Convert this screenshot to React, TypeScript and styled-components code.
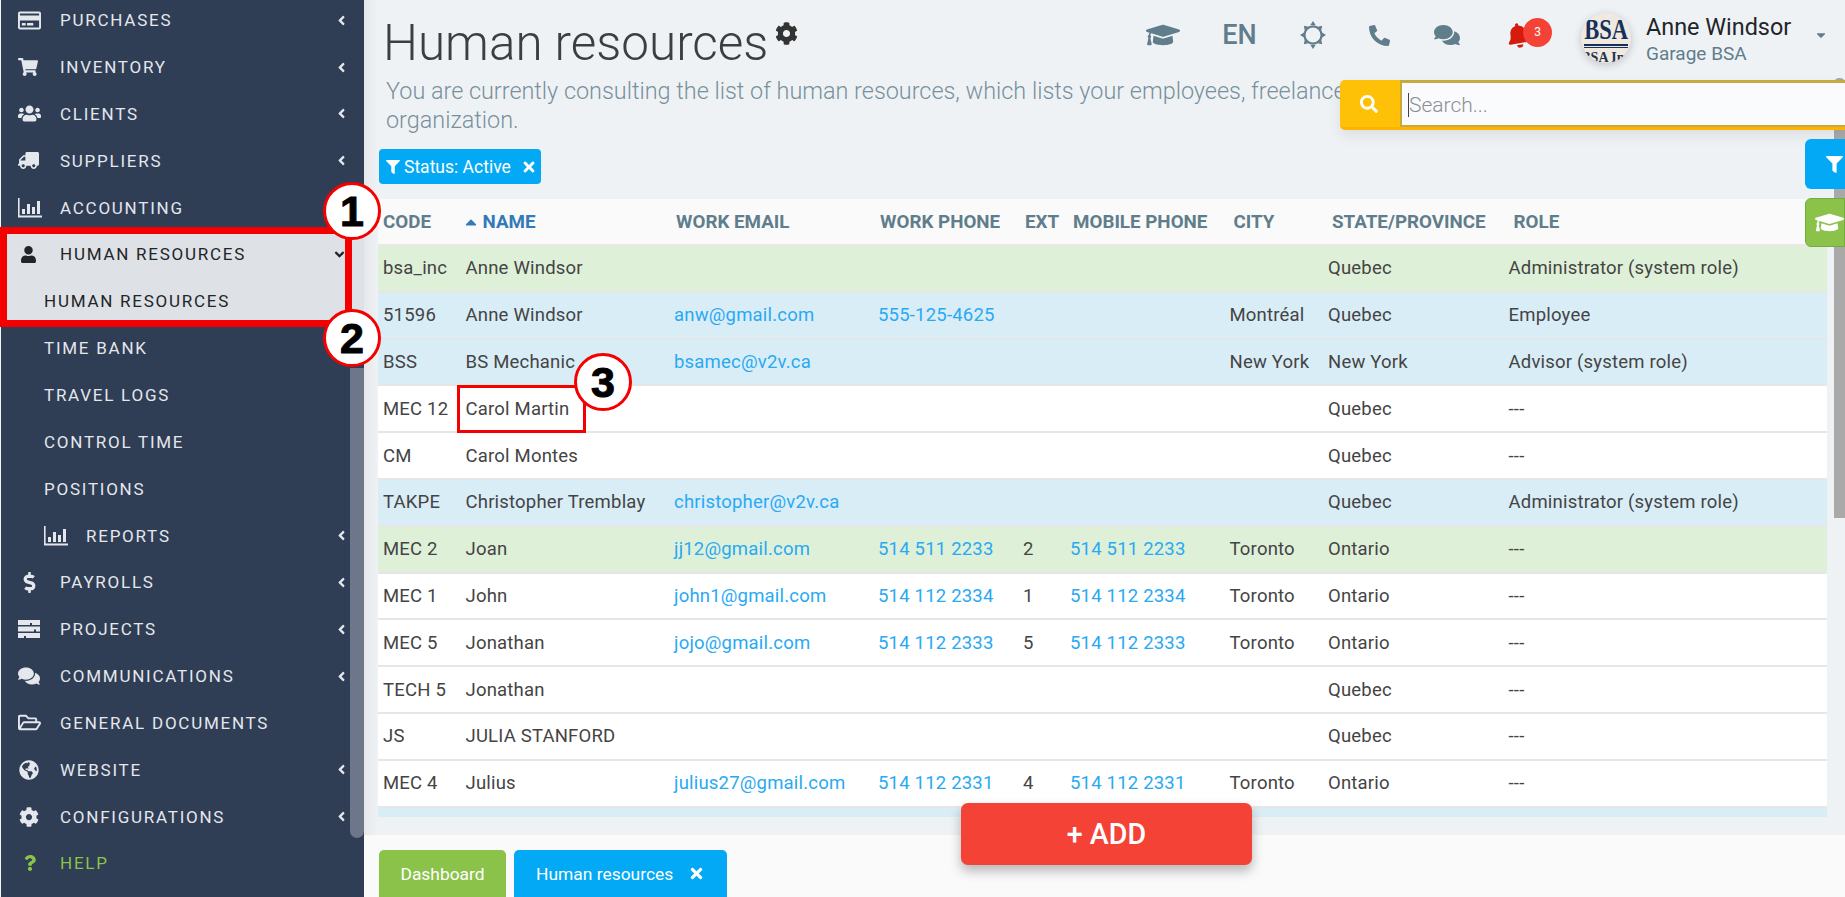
import styled, { createGlobalStyle } from "styled-components";
import type { ReactNode } from "react";
import {
  FaAngleDown,
  FaAngleLeft,
  FaBell,
  FaCaretDown,
  FaCaretUp,
  FaCog,
  FaComments,
  FaDollarSign,
  FaFilter,
  FaGlobeAmericas,
  FaGraduationCap,
  FaPhoneAlt,
  FaQuestion,
  FaRegCreditCard,
  FaRegFolderOpen,
  FaSearch,
  FaShoppingCart,
  FaTimes,
  FaTruck,
  FaUser,
  FaUsers,
} from "react-icons/fa";

// ===== small drawn icons =====

const BarChartIcon = () => (
  <svg width="24" height="20" viewBox="0 0 24 20" fill="currentColor">
    <path d="M0 0h1.6v17.6H24V19.4H0z" />
    <path d="M4 11h3v5H4zM9 6h3v10H9zM14 9h3v7h-3zM19 3h3v13h-3z" />
  </svg>
);

const TasksIcon = () => (
  <svg width="22" height="18" viewBox="0 0 22 18" fill="currentColor">
    <path d="M0 0h22v5H14V3h-2v2H0zM0 6.5h22v5h-4v-2h-2v2H0zM0 13h22v5H8v-2H6v2H0z" />
  </svg>
);

const SunOutlineIcon = () => (
  <svg width="26" height="28" viewBox="0 0 26 28" fill="none" stroke="currentColor">
    <circle cx="13" cy="14" r="8.6" strokeWidth="2.2" />
    <path
      d="M13 0l2.6 4h-5.2zM13 28l2.6-4h-5.2zM0 14l4-2.6v5.2zM26 14l-4-2.6v5.2zM3.8 4.8l4.6 1-3.6 3.6zM22.2 4.8l-4.6 1 3.6 3.6zM3.8 23.2l4.6-1-3.6-3.6zM22.2 23.2l-4.6-1 3.6-3.6z"
      fill="currentColor"
      stroke="none"
    />
  </svg>
);

const FlippedTruck = styled(FaTruck)`
  transform: scaleX(-1);
`;

const TiltedBell = styled(FaBell)`
  margin-left: 3px;
  transform: rotate(-10deg);
`;

// ===== data =====

type MenuItem = {
  label: string;
  icon?: ReactNode;
  inset?: number;
  sub?: boolean;
  active?: boolean;
  open?: boolean;
  arrow?: boolean;
  help?: boolean;
};

const menu: MenuItem[] = [
  { label: "Purchases", icon: <FaRegCreditCard size={23} />, arrow: true },
  { label: "Inventory", icon: <FaShoppingCart size={20} />, arrow: true },
  { label: "Clients", icon: <FaUsers size={23} />, arrow: true },
  { label: "Suppliers", icon: <FlippedTruck size={21} />, arrow: true },
  { label: "Accounting", icon: <BarChartIcon /> },
  { label: "Human resources", icon: <FaUser size={17} />, inset: 2, arrow: true, active: true, open: true },
  { label: "Human resources", sub: true, active: true },
  { label: "Time bank", sub: true },
  { label: "Travel logs", sub: true },
  { label: "Control time", sub: true },
  { label: "Positions", sub: true },
  { label: "Reports", sub: true, icon: <BarChartIcon />, arrow: true },
  { label: "Payrolls", icon: <FaDollarSign size={21} />, inset: 1, arrow: true },
  { label: "Projects", icon: <TasksIcon />, arrow: true },
  { label: "Communications", icon: <FaComments size={22} />, arrow: true },
  { label: "General documents", icon: <FaRegFolderOpen size={23} /> },
  { label: "Website", icon: <FaGlobeAmericas size={20} />, inset: 1, arrow: true },
  { label: "Configurations", icon: <FaCog size={20} />, inset: 1, arrow: true },
  { label: "Help", icon: <FaQuestion size={16} />, inset: 4, help: true },
];

type Tone = "green" | "blue" | "white";

type Employee = {
  tone: Tone;
  code: string;
  name: string;
  email?: string;
  phone?: string;
  ext?: string;
  mobile?: string;
  city?: string;
  state: string;
  role: string;
};

const employees: Employee[] = [
  { tone: "green", code: "bsa_inc", name: "Anne Windsor", state: "Quebec", role: "Administrator (system role)" },
  { tone: "blue", code: "51596", name: "Anne Windsor", email: "anw@gmail.com", phone: "555-125-4625", city: "Montréal", state: "Quebec", role: "Employee" },
  { tone: "blue", code: "BSS", name: "BS Mechanic", email: "bsamec@v2v.ca", city: "New York", state: "New York", role: "Advisor (system role)" },
  { tone: "white", code: "MEC 12", name: "Carol Martin", state: "Quebec", role: "---" },
  { tone: "white", code: "CM", name: "Carol Montes", state: "Quebec", role: "---" },
  { tone: "blue", code: "TAKPE", name: "Christopher Tremblay", email: "christopher@v2v.ca", state: "Quebec", role: "Administrator (system role)" },
  { tone: "green", code: "MEC 2", name: "Joan", email: "jj12@gmail.com", phone: "514 511 2233", ext: "2", mobile: "514 511 2233", city: "Toronto", state: "Ontario", role: "---" },
  { tone: "white", code: "MEC 1", name: "John", email: "john1@gmail.com", phone: "514 112 2334", ext: "1", mobile: "514 112 2334", city: "Toronto", state: "Ontario", role: "---" },
  { tone: "white", code: "MEC 5", name: "Jonathan", email: "jojo@gmail.com", phone: "514 112 2333", ext: "5", mobile: "514 112 2333", city: "Toronto", state: "Ontario", role: "---" },
  { tone: "white", code: "TECH 5", name: "Jonathan", state: "Quebec", role: "---" },
  { tone: "white", code: "JS", name: "JULIA STANFORD", state: "Quebec", role: "---" },
  { tone: "white", code: "MEC 4", name: "Julius", email: "julius27@gmail.com", phone: "514 112 2331", ext: "4", mobile: "514 112 2331", city: "Toronto", state: "Ontario", role: "---" },
];

const toneColors: Record<Tone, string> = {
  green: "#dff0d8",
  blue: "#d9edf7",
  white: "#ffffff",
};

// ===== styled-components =====

const GlobalStyle = createGlobalStyle`
  html, body {
    margin: 0;
    height: 100%;
    overflow: hidden;
    background: #eff2f5;
    font-family: Roboto, "Liberation Sans", sans-serif;
  }
  * { box-sizing: border-box; }
`;

const Page = styled.div`
  position: relative;
  display: flex;
  width: 1845px;
  height: 897px;
  overflow: hidden;
`;

const Sidebar = styled.nav`
  position: relative;
  flex: 0 0 364px;
  height: 897px;
  border-left: 1px solid #f4f4f4;
  background: #2f3d55;
  overflow: hidden;
`;

const MenuList = styled.div`
  margin-top: -3.2px;
`;

const MenuRow = styled.div<{ $sub?: boolean; $active?: boolean; $help?: boolean }>`
  display: flex;
  align-items: center;
  height: 46.85px;
  padding: 0 15px 0 ${({ $sub }) => ($sub ? "43px" : "17px")};
  background: ${({ $active }) => ($active ? "#dee1e5" : "transparent")};
  color: ${({ $active, $help }) =>
    $active ? "#212529" : $help ? "#8bc34a" : "#e4e7ec"};
  font-size: 17px;
  letter-spacing: 1.75px;
  text-transform: uppercase;
`;

const MenuIcon = styled.span<{ $inset?: number }>`
  display: flex;
  align-items: center;
  flex: 0 0 42px;
  padding-left: ${({ $inset }) => $inset ?? 0}px;
`;

const MenuLabel = styled.span`
  flex: 1;
`;

const OpenArrow = styled.span`
  display: flex;
  margin-right: 2px;
`;

const SideThumb = styled.div`
  position: absolute;
  top: 368px;
  right: 0;
  width: 14px;
  height: 470px;
  border-radius: 0 0 7px 7px;
  background: #6d7789;
`;

const Main = styled.main`
  display: flex;
  flex: 1;
  flex-direction: column;
  min-width: 0;
  background: linear-gradient(to right, #e6e8eb, #eff2f5 14px);
`;

const Head = styled.header`
  height: 199px;
  padding-left: 14px;
`;

const TopRow = styled.div`
  display: flex;
  align-items: flex-start;
  height: 72px;
`;

const Title = styled.h1`
  margin: 13px 0 0 5px;
  color: #3c3f42;
  font-size: 49.4px;
  font-weight: 300;
  line-height: 60px;
  white-space: nowrap;
`;

const TitleGear = styled.span`
  margin: 22px 0 0 7px;
  color: #333;
  font-size: 23px;
`;

const Tools = styled.div`
  display: grid;
  grid-template-columns: 76px 77px 70px 62px 73.5px 67.5px;
  align-items: center;
  height: 70px;
  margin-left: auto;
  color: #607d8b;
`;

const ToolSlot = styled.span<{ $alert?: boolean }>`
  position: relative;
  display: flex;
  align-items: center;
  justify-content: center;
  color: ${({ $alert }) => ($alert ? "#d61a0c" : "inherit")};
  font-size: 27px;
  font-weight: 500;
`;

const BellBadge = styled.span`
  position: absolute;
  top: -5px;
  left: 39.5px;
  width: 29px;
  height: 29px;
  border-radius: 50%;
  background: #f44336;
  color: #fff;
  font-size: 12px;
  font-weight: 400;
  line-height: 29px;
  text-align: center;
`;

const UserBlock = styled.div`
  display: flex;
  align-items: center;
  width: 294px;
  height: 76px;
  padding-left: 30px;
`;

const Avatar = styled.div`
  display: flex;
  flex-direction: column;
  align-items: center;
  flex: 0 0 50px;
  height: 50px;
  border-radius: 50%;
  background: #efe9df;
  box-shadow: 0 2px 8px rgba(0, 0, 0, 0.2);
  color: #16305c;
  font-family: "Liberation Serif", serif;
  overflow: hidden;
`;

const AvatarMark = styled.span`
  margin-top: 1px;
  font-size: 30px;
  font-weight: 700;
  line-height: 30px;
  transform: scaleX(0.75);
`;

const AvatarRule = styled.span`
  flex: 0 0 4px;
  width: 44px;
  border-bottom: 1px solid #16305c;
  border-top: 2px solid #16305c;
`;

const AvatarSmall = styled.span`
  margin-top: 3px;
  color: #26334e;
  font-size: 14px;
  font-weight: 700;
  line-height: 14px;
  white-space: nowrap;
`;

const UserText = styled.div`
  flex: 1;
  margin: 2px 0 0 15px;
  white-space: nowrap;
`;

const UserName = styled.div`
  color: #212529;
  font-size: 23.4px;
  line-height: 28px;
`;

const UserOrg = styled.div`
  margin-top: 2px;
  color: #607d8b;
  font-size: 19px;
  line-height: 22px;
`;

const UserCaret = styled.span`
  display: flex;
  margin: -6px 17px 0 0;
  color: #607d8b;
  font-size: 14px;
`;

const Description = styled.p`
  margin: 5px 0 0 8px;
  color: #78909c;
  font-size: 23.4px;
  font-weight: 300;
  line-height: 29px;
  white-space: nowrap;
`;

const FilterChip = styled.div`
  display: inline-flex;
  align-items: center;
  gap: 4px;
  height: 35px;
  margin: 14px 0 0 1px;
  padding: 0 4px 0 7px;
  border-radius: 4px;
  background: #03a9f4;
  color: #fff;
  font-size: 17.5px;
`;

const ChipClose = styled.span`
  display: flex;
  margin-left: 6px;
  font-size: 16px;
`;

const TableWrap = styled.div`
  margin: 0 0 0 14px;
  height: 617px;
`;

const HeadRow = styled.div`
  display: grid;
  grid-template-columns: 82.5px 208.5px 204px 145px 47px 159.5px 98.5px 180.5px 1fr;
  align-items: center;
  height: 47px;
  padding-left: 5px;
  border-bottom: 2px solid #e8e8e8;
  background: #fafafa;
  color: #607d8b;
  font-size: 18.8px;
  font-weight: 700;
`;

const HeadCell = styled.span<{ $sorted?: boolean; $shift?: number }>`
  display: flex;
  align-items: center;
  gap: 3px;
  padding-left: ${({ $shift }) => $shift ?? 2}px;
  color: ${({ $sorted }) => ($sorted ? "#337ab7" : "inherit")};
  white-space: nowrap;
`;

const SortCaret = styled.span`
  display: flex;
  margin-left: -4px;
  font-size: 18px;
`;

const Row = styled.div<{ $tone: Tone }>`
  display: grid;
  grid-template-columns: 82.5px 208.5px 204px 145px 47px 159.5px 98.5px 180.5px 1fr;
  align-items: center;
  width: 1449px;
  height: 46.8px;
  padding-left: 5px;
  border-bottom: 2px solid #e6e6e6;
  background: ${({ $tone }) => toneColors[$tone]};
  color: #444;
  font-size: 18.5px;
  letter-spacing: 0.2px;
`;

const StubRow = styled.div`
  width: 1449px;
  height: 9px;
  background: #d9edf7;
`;

const Cell = styled.span`
  white-space: nowrap;
`;

const LinkCell = styled.a`
  color: #29a9f3;
  white-space: nowrap;
`;

const Footer = styled.footer`
  display: flex;
  align-items: flex-end;
  gap: 8px;
  height: 62px;
  margin-top: auto;
  padding-left: 15px;
  background: #fafafa;
`;

const Tab = styled.div<{ $blue?: boolean }>`
  display: flex;
  align-items: center;
  height: 47px;
  padding: 0 ${({ $blue }) => ($blue ? "22px 0 22px" : "21.5px")};
  border-radius: 5px 5px 0 0;
  background: ${({ $blue }) => ($blue ? "#03a9f4" : "#8bc34a")};
  color: #fff;
  font-size: 17.4px;
`;

const TabClose = styled.span`
  display: flex;
  margin-left: 15px;
  font-size: 17px;
`;

const SearchBox = styled.div`
  position: absolute;
  top: 80px;
  left: 1340px;
  display: flex;
  width: 505px;
  height: 50px;
  border-bottom: 3px solid #ffb300;
  border-radius: 5px 0 0 5px;
  background: #ffc107;
  box-shadow: 0 6px 14px rgba(0, 0, 0, 0.08);
`;

const SearchButton = styled.div`
  display: flex;
  align-items: center;
  justify-content: center;
  flex: 0 0 57px;
  color: #fff;
  font-size: 18px;
`;

const SearchField = styled.div`
  display: flex;
  align-items: center;
  flex: 1;
  margin-left: 3px;
  padding: 1px 0 0 6px;
  border-top: 3px solid #c8a93c;
  border-bottom: 2px solid #c8a93c;
  border-left: 2px solid #c8a93c;
  background: #fafbfc;
`;

const SearchCaret = styled.span`
  width: 1px;
  height: 24px;
  background: #444;
`;

const SearchInput = styled.input`
  flex: 1;
  padding: 0;
  border: 0;
  outline: 0;
  background: transparent;
  font-family: Roboto, sans-serif;
  font-size: 21px;
  font-weight: 300;

  &::placeholder {
    color: #8a8f94;
    opacity: 1;
  }
`;

const SideButton = styled.div<{ $green?: boolean }>`
  position: absolute;
  left: 1805px;
  display: flex;
  align-items: center;
  top: ${({ $green }) => ($green ? "198px" : "139px")};
  width: 40px;
  height: ${({ $green }) => ($green ? "49px" : "50px")};
  padding-left: ${({ $green }) => ($green ? "9px" : "21px")};
  border: ${({ $green }) => ($green ? "1px solid #74ad3c" : "0")};
  border-radius: 6px 0 0 6px;
  background: ${({ $green }) => ($green ? "#8bc34a" : "#03a9f4")};
  color: #fff;
  font-size: ${({ $green }) => ($green ? "33px" : "17px")};
  overflow: hidden;
  z-index: 2;
`;

const PageThumb = styled.div`
  position: absolute;
  top: 78px;
  right: 0;
  width: 11px;
  height: 440px;
  border-radius: 5px 5px 0 0;
  background: #a9a9a9;
`;

const AddButton = styled.div`
  position: absolute;
  top: 803px;
  left: 961px;
  display: flex;
  align-items: center;
  justify-content: center;
  width: 291px;
  height: 62px;
  border-radius: 7px;
  background: #f44336;
  box-shadow: 0 6px 12px rgba(0, 0, 0, 0.28);
  color: #fff;
  font-size: 28.6px;
  font-weight: 500;
`;

const Outline = styled.div<{ $x: number; $y: number; $w: number; $h: number; $line: number }>`
  position: absolute;
  top: ${({ $y }) => $y}px;
  left: ${({ $x }) => $x}px;
  width: ${({ $w }) => $w}px;
  height: ${({ $h }) => $h}px;
  border: ${({ $line }) => $line}px solid #f40000;
`;

const Marker = styled.div<{ $x: number; $y: number }>`
  position: absolute;
  top: ${({ $y }) => $y - 29}px;
  left: ${({ $x }) => $x - 29}px;
  width: 58px;
  height: 58px;
  border: 3px solid #f40000;
  border-radius: 50%;
  background: #fff;
  color: #000;
  font-family: "Liberation Sans", sans-serif;
  font-size: 43px;
  font-weight: 700;
  line-height: 52px;
  text-align: center;
  -webkit-text-stroke: 1px #000;
`;

// ===== component =====

export default function App() {
  return (
    <Page>
      <GlobalStyle />

      <Sidebar>
        <MenuList>
          {menu.map((item, i) => (
            <MenuRow key={i} $sub={item.sub} $active={item.active} $help={item.help}>
              {item.icon && <MenuIcon $inset={item.inset}>{item.icon}</MenuIcon>}
              <MenuLabel>{item.label}</MenuLabel>
              {item.arrow &&
                (item.open ? (
                  <OpenArrow>
                    <FaAngleDown size={15} />
                  </OpenArrow>
                ) : (
                  <FaAngleLeft size={15} />
                ))}
            </MenuRow>
          ))}
        </MenuList>
        <SideThumb />
      </Sidebar>

      <Main>
        <Head>
          <TopRow>
            <Title>Human resources</Title>
            <TitleGear>
              <FaCog />
            </TitleGear>
            <Tools>
              <ToolSlot>
                <FaGraduationCap size={34} />
              </ToolSlot>
              <ToolSlot>EN</ToolSlot>
              <ToolSlot>
                <SunOutlineIcon />
              </ToolSlot>
              <ToolSlot>
                <FaPhoneAlt size={21} />
              </ToolSlot>
              <ToolSlot>
                <FaComments size={26} />
              </ToolSlot>
              <ToolSlot $alert>
                <TiltedBell size={25} />
                <BellBadge>3</BellBadge>
              </ToolSlot>
            </Tools>
            <UserBlock>
              <Avatar>
                <AvatarMark>BSA</AvatarMark>
                <AvatarRule />
                <AvatarSmall>BSA Inc</AvatarSmall>
              </Avatar>
              <UserText>
                <UserName>Anne Windsor</UserName>
                <UserOrg>Garage BSA</UserOrg>
              </UserText>
              <UserCaret>
                <FaCaretDown />
              </UserCaret>
            </UserBlock>
          </TopRow>
          <Description>
            You are currently consulting the list of human resources, which lists your employees, freelancers and collaborators
            <br />
            organization.
          </Description>
          <FilterChip>
            <FaFilter size={14} />
            Status: Active
            <ChipClose>
              <FaTimes />
            </ChipClose>
          </FilterChip>
        </Head>

        <TableWrap>
          <HeadRow>
            <HeadCell $shift={0}>CODE</HeadCell>
            <HeadCell $sorted $shift={0}>
              <SortCaret>
                <FaCaretUp />
              </SortCaret>
              NAME
            </HeadCell>
            <HeadCell>WORK EMAIL</HeadCell>
            <HeadCell>WORK PHONE</HeadCell>
            <HeadCell>EXT</HeadCell>
            <HeadCell $shift={3}>MOBILE PHONE</HeadCell>
            <HeadCell $shift={4}>CITY</HeadCell>
            <HeadCell $shift={4}>STATE/PROVINCE</HeadCell>
            <HeadCell $shift={5}>ROLE</HeadCell>
          </HeadRow>
          {employees.map((person) => (
            <Row key={person.code} $tone={person.tone}>
              <Cell>{person.code}</Cell>
              <Cell>{person.name}</Cell>
              <LinkCell>{person.email}</LinkCell>
              <LinkCell>{person.phone}</LinkCell>
              <Cell>{person.ext}</Cell>
              <LinkCell>{person.mobile}</LinkCell>
              <Cell>{person.city}</Cell>
              <Cell>{person.state}</Cell>
              <Cell>{person.role}</Cell>
            </Row>
          ))}
          <StubRow />
        </TableWrap>

        <Footer>
          <Tab>Dashboard</Tab>
          <Tab $blue>
            Human resources
            <TabClose>
              <FaTimes />
            </TabClose>
          </Tab>
        </Footer>
      </Main>

      <PageThumb />

      <SearchBox>
        <SearchButton>
          <FaSearch />
        </SearchButton>
        <SearchField>
          <SearchCaret />
          <SearchInput placeholder="Search..." />
        </SearchField>
      </SearchBox>

      <SideButton>
        <FaFilter />
      </SideButton>
      <SideButton $green>
        <FaGraduationCap />
      </SideButton>

      <AddButton>+ ADD</AddButton>

      <Outline $x={0} $y={227} $w={352} $h={100} $line={7} />
      <Outline $x={457} $y={385} $w={129} $h={48} $line={3} />
      <Marker $x={352} $y={211}>1</Marker>
      <Marker $x={352} $y={338}>2</Marker>
      <Marker $x={603} $y={382}>3</Marker>
    </Page>
  );
}
